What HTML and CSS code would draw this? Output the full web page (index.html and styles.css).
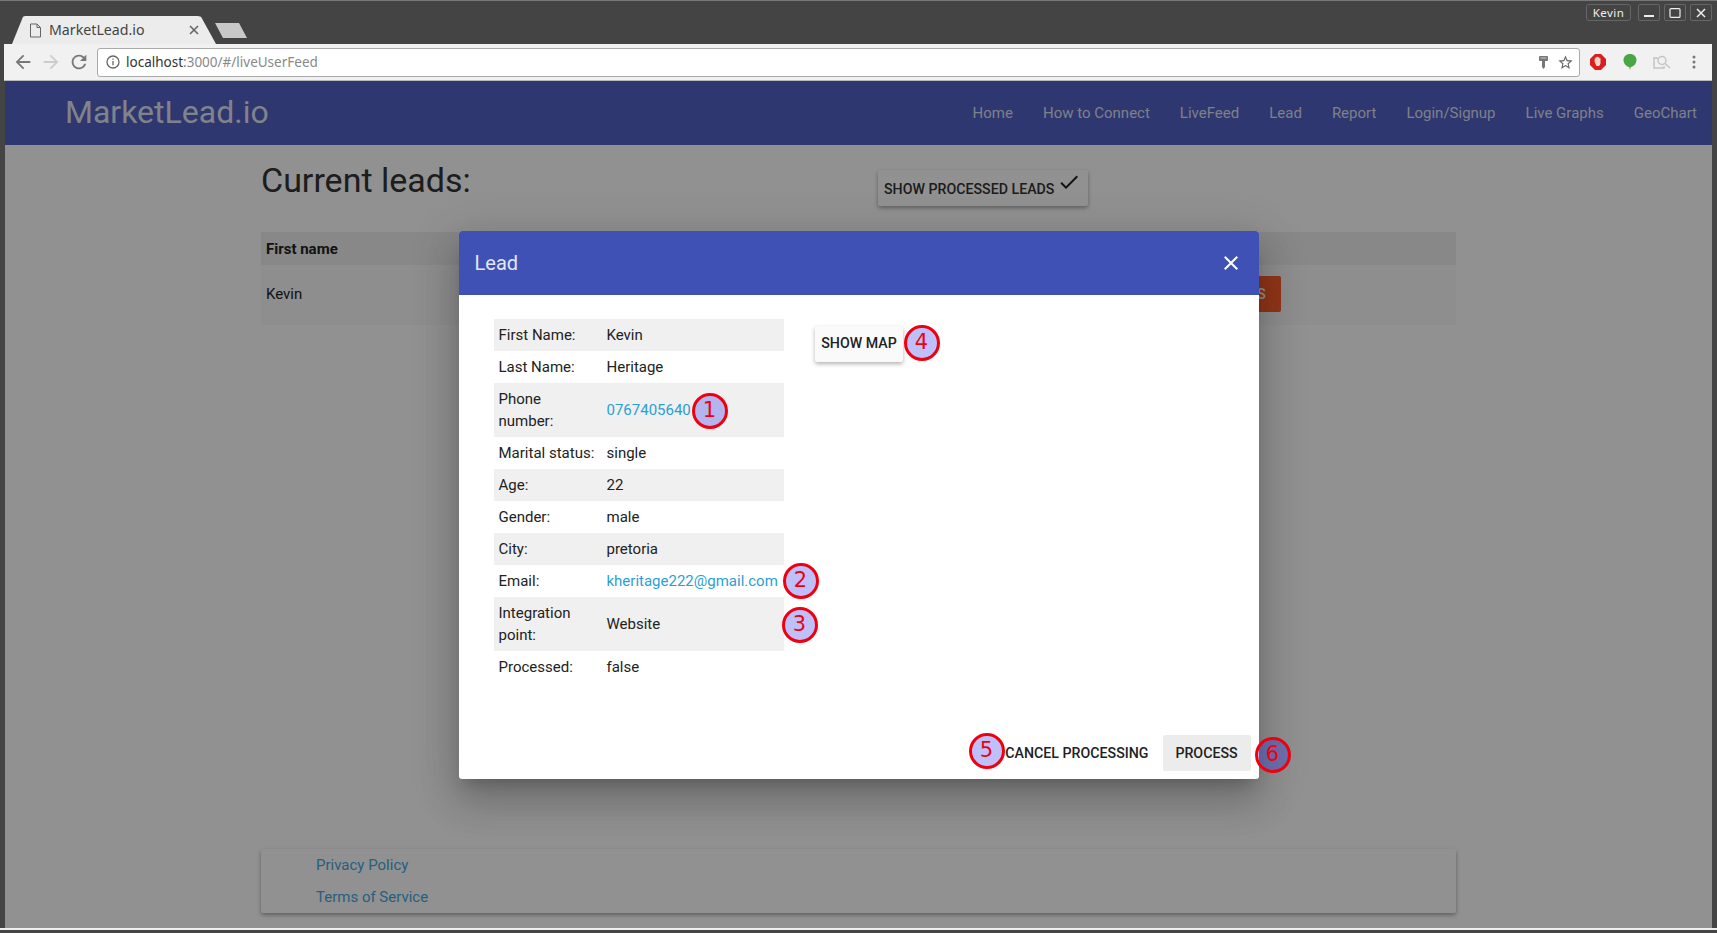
FILE: index.html
```html
<!DOCTYPE html>
<html lang="en">
<head>
  <meta charset="utf-8" />
  <meta name="viewport" content="width=device-width, initial-scale=1" />
  <title>MarketLead.io</title>
  <link rel="stylesheet" href="styles.css">
</head>
<body>
  <div class="window">
    <div class="titlebar">
      <div class="tab">
        <svg class="tab-doc" width="13" height="15" viewBox="0 0 13 15" fill="none" stroke="#666" stroke-width="1">
          <path d="M1.5 1H8l3.5 3.5V14h-10z"/>
          <path d="M8 1v3.5h3.5"/>
        </svg>
        <span class="tab-title">MarketLead.io</span>
        <svg class="tab-close" width="10" height="10" viewBox="0 0 10 10" stroke="#666" stroke-width="1.6">
          <path d="M1 1l8 8M9 1l-8 8"/>
        </svg>
      </div>
      <div class="new-tab"></div>
      <div class="win-controls">
        <div class="win-user">Kevin</div>
        <div class="win-btn">
          <svg width="12" height="12" viewBox="0 0 12 12" fill="#eee"><rect x="1" y="8" width="10" height="2"/></svg>
        </div>
        <div class="win-btn">
          <svg width="12" height="12" viewBox="0 0 12 12" fill="none" stroke="#eee" stroke-width="1.2"><rect x="1" y="1.6" width="10" height="8.8" rx="1"/></svg>
        </div>
        <div class="win-btn">
          <svg width="12" height="12" viewBox="0 0 12 12" stroke="#eee" stroke-width="1.5"><path d="M2 2l8 8M10 2l-8 8"/></svg>
        </div>
      </div>
    </div>

    <div class="toolbar">
      <svg class="tool-icon" width="22" height="22" viewBox="0 0 24 24" fill="#777"><path d="M20 11H7.83l5.59-5.59L12 4l-8 8 8 8 1.41-1.41L7.83 13H20v-2z"/></svg>
      <svg class="tool-icon" width="22" height="22" viewBox="0 0 24 24" fill="#ccc"><path d="M4 11h12.17l-5.59-5.59L12 4l8 8-8 8-1.41-1.41L16.17 13H4v-2z"/></svg>
      <svg class="tool-icon" width="22" height="22" viewBox="0 0 24 24" fill="#777"><path d="M17.65 6.35C16.2 4.9 14.21 4 12 4c-4.42 0-7.99 3.58-7.99 8s3.57 8 7.99 8c3.73 0 6.84-2.55 7.73-6h-2.08c-.82 2.33-3.04 4-5.65 4-3.31 0-6-2.69-6-6s2.69-6 6-6c1.66 0 3.14.69 4.22 1.78L13 11h7V4l-2.35 2.35z"/></svg>
      <div class="omnibox">
        <svg width="14" height="14" viewBox="0 0 14 14" fill="none" stroke="#666" stroke-width="1.3">
          <circle cx="7" cy="7" r="6"/>
          <path d="M7 6v4.2M7 3.4v1.4"/>
        </svg>
        <span class="url"><span class="url-host">localhost</span>:3000/#/liveUserFeed</span>
        <svg class="omni-key" width="9" height="13" viewBox="0 0 9 13"><path d="M1 0h7a1 1 0 0 1 1 1v3a1 1 0 0 1-1 1H6v6l-1.500 2L3 11V5H1a1 1 0 0 1-1-1V1a1 1 0 0 1 1-1z" fill="#777"/><rect x="1.500" y="1.500" width="6" height="1" fill="#ccc"/></svg>
        <svg width="17" height="17" viewBox="0 0 24 24" fill="#666"><path d="M22 9.24l-7.19-.62L12 2 9.19 8.63 2 9.24l5.46 4.73L5.82 21 12 17.27 18.18 21l-1.63-7.03L22 9.24zM12 15.4l-3.76 2.27 1-4.28-3.32-2.88 4.38-.38L12 6.1l1.71 4.04 4.38.38-3.32 2.88 1 4.28L12 15.4z"/></svg>
      </div>
      <div class="extensions">
        <svg width="16" height="16" viewBox="0 0 16 16"><path d="M5 0h6l5 5v6l-5 5H5l-5-5V5z" fill="#d81e1e"/><path d="M4.6 8V4.4h1V3.3h1.2v-.5h1.3v.5h1.2v1h1.2V9.5l-1.2 2.6H6.400z" fill="#f3d4c8"/></svg>
        <svg width="14" height="17" viewBox="0 0 14 17"><path d="M7 0c3.900 0 6.500 2.700 6.500 6.100 0 3.700-2.900 6.400-5.700 7L7 16l-.8-2.900C3.400 12.500.5 9.800.5 6.100.5 2.700 3.100 0 7 0z" fill="#4aa544"/></svg>
        <svg width="18" height="15" viewBox="0 0 18 15" fill="none" stroke="#c4c4c4" stroke-width="1.500"><path d="M5 3H1v10h10v-2"/><circle cx="9" cy="5.500" r="4"/><path d="M12 8.500l5 4.500"/></svg>
        <svg width="4" height="14" viewBox="0 0 4 14" fill="#777"><circle cx="2" cy="2" r="1.500"/><circle cx="2" cy="7" r="1.500"/><circle cx="2" cy="12" r="1.500"/></svg>
      </div>
    </div>

    <div class="page">
      <nav class="navbar">
        <a class="brand">MarketLead.io</a>
        <div class="nav-links">
          <a>Home</a>
          <a>How to Connect</a>
          <a>LiveFeed</a>
          <a>Lead</a>
          <a>Report</a>
          <a>Login/Signup</a>
          <a>Live Graphs</a>
          <a>GeoChart</a>
        </div>
      </nav>

      <main class="container">
        <div class="leads-head">
          <h1>Current leads:</h1>
          <button class="btn-raised">
            Show processed leads
            <svg width="24" height="24" viewBox="0 0 24 24" fill="#222"><path d="M9 16.170L4.830 12l-1.420 1.410L9 19 21 7l-1.410-1.410z"/></svg>
          </button>
        </div>
        <div class="leads-table">
          <div class="leads-th">First name</div>
          <div class="leads-tr">
            <span>Kevin</span>
            <button class="btn-orange">Process</button>
          </div>
        </div>
        <footer class="site-footer">
          <a>Privacy Policy</a>
          <a>Terms of Service</a>
        </footer>
      </main>

      <div class="overlay">
        <div class="modal">
          <div class="modal-head">
            <span>Lead</span>
            <svg width="24" height="24" viewBox="0 0 24 24" fill="#fff"><path d="M19 6.410L17.590 5 12 10.590 6.410 5 5 6.410 10.590 12 5 17.590 6.410 19 12 13.410 17.590 19 19 17.590 13.410 12z"/></svg>
          </div>
          <div class="modal-body">
            <table class="lead-table">
              <tr><td>First Name:</td><td>Kevin</td></tr>
              <tr><td>Last Name:</td><td>Heritage</td></tr>
              <tr><td>Phone number:</td><td><a>0767405640</a></td></tr>
              <tr><td>Marital status:</td><td>single</td></tr>
              <tr><td>Age:</td><td>22</td></tr>
              <tr><td>Gender:</td><td>male</td></tr>
              <tr><td>City:</td><td>pretoria</td></tr>
              <tr><td>Email:</td><td><a>kheritage222@gmail.com</a></td></tr>
              <tr><td>Integration point:</td><td>Website</td></tr>
              <tr><td>Processed:</td><td>false</td></tr>
            </table>
            <button class="btn-map">Show map</button>
          </div>
          <div class="modal-foot">
            <button class="btn-flat">Cancel processing</button>
            <button class="btn-flat btn-grey">Process</button>
          </div>
          <span class="marker marker-1">1</span>
          <span class="marker marker-2">2</span>
          <span class="marker marker-3">3</span>
          <span class="marker marker-4">4</span>
          <span class="marker marker-5">5</span>
          <span class="marker marker-6">6</span>
        </div>
      </div>
    </div>

    <div class="window-bottom"></div>
  </div>
</body>
</html>
```

FILE: styles.css
```css
* {
  margin: 0;
  padding: 0;
  box-sizing: border-box;
}

html, body {
  height: 100%;
  overflow: hidden;
}

body {
  font-family: Roboto, 'Liberation Sans', sans-serif;
  font-size: 15px;
  color: #222;
}

button {
  border: none;
  font-family: inherit;
}

.window {
  display: flex;
  flex-direction: column;
  height: 100vh;
  background: #444;
  border-top: 1px solid #777;
}

/* browser chrome */
.titlebar {
  display: flex;
  align-items: flex-end;
  height: 43px;
  padding-left: 12px;
  flex: none;
}

.tab {
  display: flex;
  align-items: center;
  width: 204px;
  height: 28px;
  padding: 0 17px 0 17px;
  background: #ececec;
  clip-path: polygon(0 100%, 11px 3%, 13px 0, 186px 0, 189px 3%, 100% 100%);
}

.tab-doc {
  flex: none;
}

.tab-title {
  margin: -2px 0 0 7px;
  flex: 1;
  font-family: 'Noto Sans', sans-serif;
  font-size: 14.2px;
  color: #444;
}

.new-tab {
  width: 32px;
  height: 15px;
  margin: 0 0 6px -1px;
  background: #c8c8c8;
  clip-path: polygon(0 0, 24px 0, 100% 100%, 8px 100%);
}

.win-controls {
  display: flex;
  gap: 4px;
  margin: 0 5px 0 auto;
  align-self: flex-start;
  padding-top: 3px;
}

.win-user {
  width: 45px;
  height: 17px;
  margin-right: 3px;
  border: 1px solid #666;
  border-radius: 3px;
  font-family: 'Noto Sans', sans-serif;
  font-size: 11.5px;
  line-height: 15px;
  letter-spacing: .4px;
  text-align: center;
  color: #eee;
}

.win-btn {
  display: flex;
  align-items: center;
  justify-content: center;
  width: 22px;
  height: 17px;
  border: 1px solid #666;
  border-radius: 2px;
}

.toolbar {
  display: flex;
  align-items: center;
  height: 37px;
  margin: 0 5px 0 4px;
  padding: 0 0 0 8px;
  background: #f1f1f1;
  border-bottom: 1px solid #bbb;
  flex: none;
}

.tool-icon {
  margin-right: 6px;
}

.omnibox {
  display: flex;
  align-items: center;
  gap: 6px;
  width: 1483px;
  height: 29px;
  margin-left: 1px;
  padding: 0 5px 0 8px;
  background: #fff;
  border: 1px solid #aaa;
  border-radius: 3px;
}

.url {
  flex: 1;
  font-family: 'Noto Sans', sans-serif;
  font-size: 13.5px;
  color: #888;
}

.url-host {
  color: #333;
}

.omni-key {
  margin-right: 3px;
}

.extensions {
  display: grid;
  grid-template-columns: repeat(4, 32px);
  place-items: center;
  padding-left: 2px;
}

/* app page */
.page {
  position: relative;
  flex: 1;
  margin: 0 5px;
  background: #fff;
  overflow: hidden;
}

.window-bottom {
  flex: none;
  height: 5px;
  border-top: 2px solid #eee;
}

.navbar {
  display: flex;
  align-items: center;
  justify-content: space-between;
  height: 64px;
  padding: 0 15px 2px 60px;
  background: #5162c4;
  color: #fff;
}

.brand {
  font-size: 32px;
  color: rgba(255, 255, 255, .85);
}

.nav-links {
  display: flex;
  gap: 30px;
  padding-top: 2px;

  a {
    color: rgba(255, 255, 255, .82);
  }
}

.container {
  display: flex;
  flex-direction: column;
  width: 1195px;
  height: 783px;
  margin-left: 256px;
  padding-top: 15px;
}

.leads-head {
  display: flex;
  align-items: flex-start;
  height: 72px;

  h1 {
    width: 617px;
    font-size: 34px;
    font-weight: 400;
    line-height: 40px;
    color: #333;
  }
}

.btn-raised {
  display: flex;
  align-items: flex-start;
  width: 210px;
  height: 36px;
  margin-top: 10px;
  padding: 5px 6px;
  background: #fff;
  border-radius: 2px;
  box-shadow: 0 2px 4px rgba(0, 0, 0, .35);
  font-size: 14.2px;
  font-weight: 500;
  line-height: 28px;
  text-transform: uppercase;
  color: #333;

  svg {
    margin: -5px 0 0 3px;
  }
}

.leads-th {
  height: 33px;
  padding: 0 5px;
  background: #f0f0f0;
  font-weight: 700;
  line-height: 35px;
}

.leads-tr {
  display: flex;
  align-items: center;
  justify-content: space-between;
  height: 60px;
  padding: 0 0 2px 5px;
  background: #fafafa;
}

.btn-orange {
  width: 100px;
  height: 36px;
  margin-right: 175px;
  padding-left: 8px;
  background: #ff5f2c;
  border-radius: 2px;
  font-size: 14px;
  font-weight: 500;
  text-transform: uppercase;
  color: #fff;
}

.site-footer {
  display: flex;
  flex-direction: column;
  gap: 10px;
  height: 64px;
  margin-top: auto;
  margin-bottom: 15px;
  padding: 5px 0 0 55px;
  background: #fff;
  border-radius: 2px;
  box-shadow: 0 2px 4px rgba(0, 0, 0, .35);
  line-height: 22px;

  a {
    color: #45a8e0;
    line-height: 22px;
  }
}

/* dialog */
.overlay {
  position: absolute;
  inset: 0;
  display: flex;
  justify-content: center;
  align-items: flex-start;
  padding-top: 150px;
  background: rgba(0, 0, 0, .43);
}

.modal {
  position: relative;
  display: flex;
  flex-direction: column;
  width: 800px;
  height: 548px;
  background: #fff;
  border-radius: 3px;
  box-shadow: 0 11px 15px -7px rgba(0, 0, 0, .2), 0 24px 38px 3px rgba(0, 0, 0, .14), 0 9px 46px 8px rgba(0, 0, 0, .12);
}

.modal-head {
  display: flex;
  align-items: center;
  justify-content: space-between;
  height: 64px;
  padding: 0 16px;
  background: #3f51b5;
  border-radius: 3px 3px 0 0;
  font-size: 20px;
  color: #e3e6f5;
}

.modal-body {
  display: flex;
  align-items: flex-start;
  flex: 1;
  padding: 24px 0 0 35px;
}

.lead-table {
  width: 290px;
  table-layout: fixed;
  border-collapse: collapse;
  line-height: 22px;

  td {
    padding: 5px;
  }

  td:first-child {
    width: 108px;
  }

  tr:nth-child(odd) {
    background: #f0f0f0;
  }

  a {
    color: #2a9fd6;
  }
}

.btn-map {
  width: 88px;
  height: 36px;
  margin: 7px 0 0 31px;
  padding: 0 0 2px 1px;
  background: #fafafa;
  border-radius: 2px;
  box-shadow: 0 2px 4px rgba(0, 0, 0, .3);
  font-size: 14.2px;
  font-weight: 500;
  text-transform: uppercase;
  color: #222;
}

.modal-foot {
  display: flex;
  justify-content: flex-end;
  gap: 6px;
  padding: 8px;
}

.btn-flat {
  height: 36px;
  padding: 0 8px;
  background: none;
  border-radius: 2px;
  font-size: 14.2px;
  font-weight: 500;
  text-transform: uppercase;
  color: #222;
}

.btn-grey {
  width: 88px;
  background: #ececec;
}

/* numbered callouts drawn over the dialog */
.marker {
  position: absolute;
  width: 36px;
  height: 36px;
  background: rgba(26, 26, 235, .28);
  border: 3.5px solid #ee0011;
  border-radius: 50%;
  font-family: 'DejaVu Sans', sans-serif;
  font-size: 21px;
  line-height: 28px;
  text-align: center;
  color: #ee0011;
}

.marker-1 { left: 233px; top: 162px; }
.marker-2 { left: 324px; top: 332px; }
.marker-3 { left: 323px; top: 376px; }
.marker-4 { left: 445px; top: 94px; }
.marker-5 { left: 510px; top: 502px; }
.marker-6 { left: 796px; top: 506px; }
```
